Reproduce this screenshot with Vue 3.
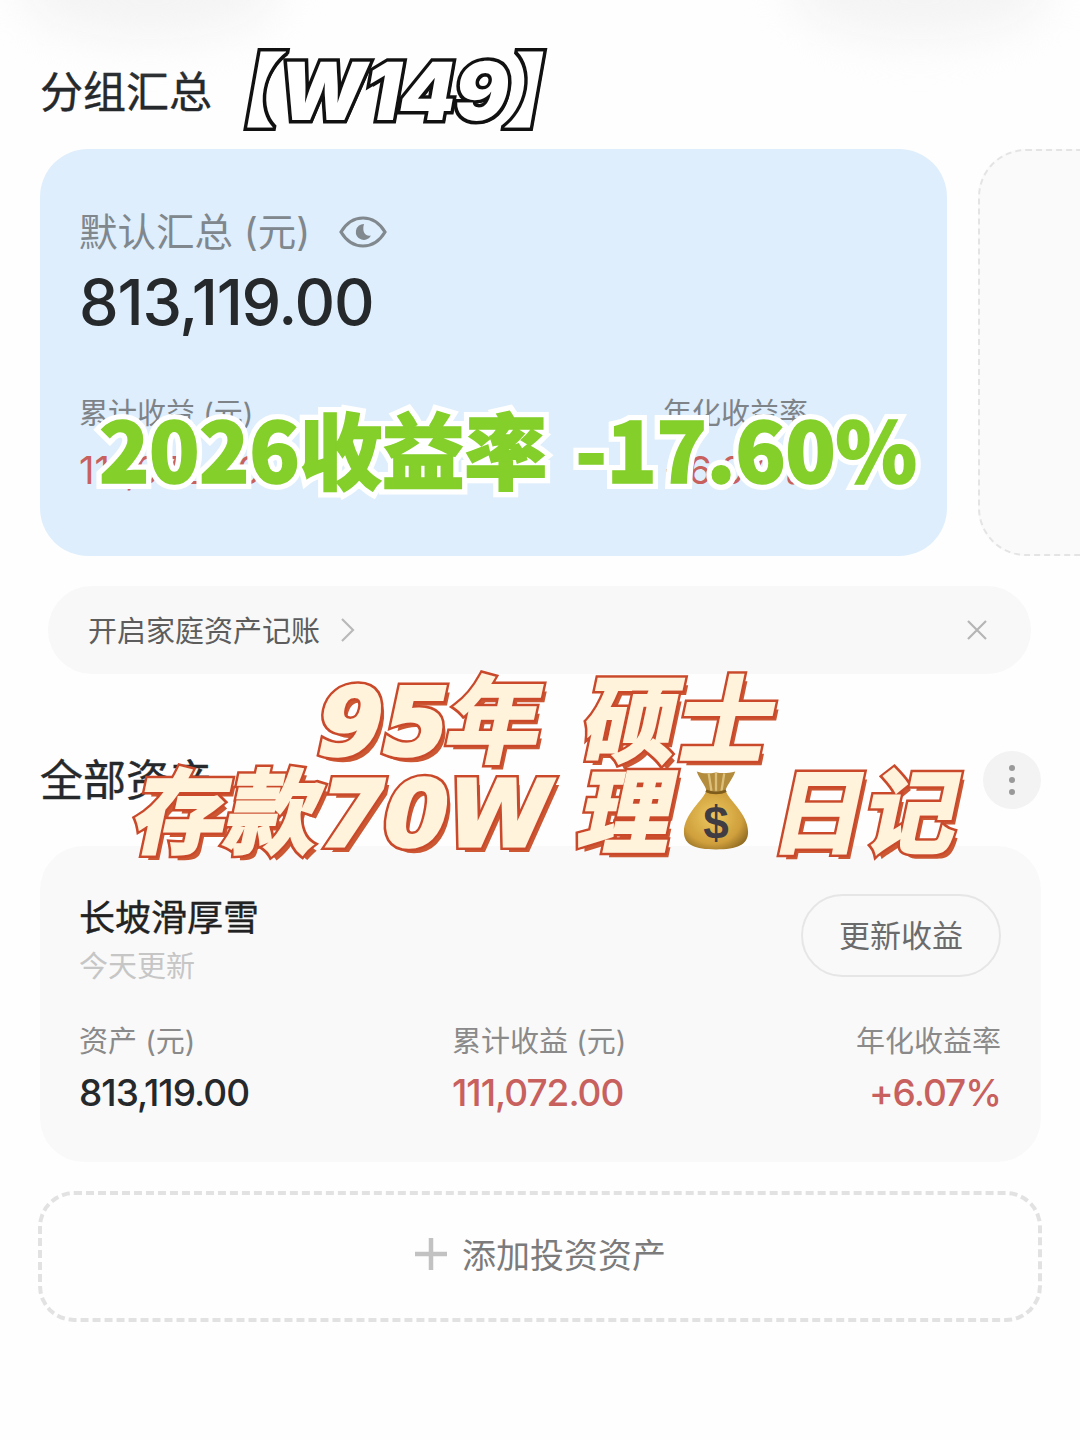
<script setup>
const assetStats = [
  { label: "资产 (元)", value: "813,119.00", cls: "" },
  { label: "累计收益 (元)", value: "111,072.00", cls: "red" },
  { label: "年化收益率", value: "+6.07%", cls: "red end" },
];
</script>

<template>
  <div class="page">
    <div class="blob blob-left"></div>
    <div class="blob blob-right"></div>

    <div class="heading">分组汇总</div>

    <div class="summary-row">
      <div class="summary">
        <div class="summary-label">
          <span>默认汇总 (元)</span>
          <svg class="eye" width="48" height="34" viewBox="0 0 48 34" fill="none">
            <path d="M2 17C8 7 15 3 24 3s16 4 22 14c-6 10-13 14-22 14S8 27 2 17Z" stroke="#81898f" stroke-width="3.2" />
            <path d="M25 9a8 8 0 1 0 7 11.5c-5 1.2-9.500-3-7-11.500Z" fill="#81898f" />
          </svg>
        </div>
        <div class="summary-value">813,119.00</div>
        <div class="summary-stats">
          <div class="stat-a">
            <div class="small-label">累计收益 (元)</div>
            <div class="small-value red">111,072.00</div>
          </div>
          <div class="stat-b">
            <div class="small-label">年化收益率</div>
            <div class="small-value red">+6.07%</div>
          </div>
        </div>
      </div>
      <div class="side-card"></div>
    </div>

    <div class="notice">
      <span class="notice-text">开启家庭资产记账</span>
      <svg width="16" height="26" viewBox="0 0 16 26" fill="none">
        <path d="M2 2l11 11L2 24" stroke="#b9b9b9" stroke-width="2.200" />
      </svg>
      <svg class="notice-close" width="22" height="22" viewBox="0 0 22 22" fill="none">
        <path d="M2 2l18 18M20 2L2 20" stroke="#b5b5b5" stroke-width="2.200" />
      </svg>
    </div>

    <div class="section-row">
      <span class="heading-text">全部资产</span>
      <div class="more"><i></i><i></i><i></i></div>
    </div>

    <div class="asset-card">
      <div class="asset-top">
        <div>
          <div class="asset-name">长坡滑厚雪</div>
          <div class="asset-date">今天更新</div>
        </div>
        <div class="update-btn">更新收益</div>
      </div>
      <div class="asset-stats">
        <div v-for="s in assetStats" :key="s.label" class="asset-stat" :class="s.cls">
          <div class="asset-stat-label">{{ s.label }}</div>
          <div class="asset-stat-value">{{ s.value }}</div>
        </div>
      </div>
    </div>

    <div class="add-box">
      <svg width="34" height="34" viewBox="0 0 34 34" fill="none">
        <path d="M17 1v32M1 17h32" stroke="#c2c2c2" stroke-width="4.500" />
      </svg>
      <span>添加投资资产</span>
    </div>

    <!-- стикеры поверх скриншота -->
    <div class="tag-week sticker" data-text="【W149】">【W149】</div>
    <div class="tag-rate sticker" data-text="2026收益率 -17.60%">2026收益率 -17.60%</div>
    <div class="tag-line tag-line-1">
      <span class="sticker" data-text="95年 硕士">95年 硕士</span>
    </div>
    <div class="tag-line tag-line-2">
      <span class="sticker" data-text="存款70W 理">存款70W 理</span>
      <svg class="bag" width="66" height="84" viewBox="0 0 72 88">
        <defs>
          <radialGradient id="bagFill" cx="45%" cy="45%" r="65%">
            <stop offset="0%" stop-color="#ecc860" />
            <stop offset="70%" stop-color="#cf9f3c" />
            <stop offset="100%" stop-color="#8f6b22" />
          </radialGradient>
        </defs>
        <path d="M15 2c8 3 14 2 21 1 7 1 13 1 21-1-3 9-9 14-11 22H26C24 16 18 11 15 2Z" fill="#b48c3e" />
        <path d="M28 4l3 19M36 3v20M45 4l-3 19" stroke="#dcc07a" stroke-width="2.500" fill="none" />
        <path d="M26 22c6 3 14 3 20 0 4 12 25 26 25 46 0 14-12 19-35 19S1 82 1 68c0-20 21-34 25-46Z" fill="url(#bagFill)" />
        <path d="M25 23c6 3 16 3 22 0" stroke="#7d5c1c" stroke-width="3" fill="none" />
        <text x="36" y="76" text-anchor="middle" class="bag-dollar">$</text>
      </svg>
      <span class="sticker tag-tail" data-text="日记">日记</span>
    </div>
  </div>
</template>

<style>
body {
  background: #fff;
}
</style>

<style scoped>
.page {
  position: relative;
  width: 1080px;
  height: 1440px;
  overflow: hidden;
  box-sizing: border-box;
  padding: 64px 39px 0 40px;
  background: #fefefe;
  color: #26292b;
  font-family: Inter, "Noto Sans CJK SC", sans-serif;
}

.blob {
  position: absolute;
  top: -60px;
  width: 260px;
  height: 100px;
  border-radius: 50%;
  background: #f4f4f4;
  filter: blur(22px);
}

.blob-left {
  left: 20px;
}

.blob-right {
  left: 790px;
}

.heading,
.heading-text {
  font-size: 43px;
  line-height: 56px;
  -webkit-text-stroke: 0.4px currentColor;
}

.heading {
  height: 85px;
}

.summary-row {
  display: flex;
  gap: 31px;
  margin-right: -39px;
  overflow: hidden;
}

.summary {
  flex: none;
  box-sizing: border-box;
  width: 907px;
  height: 407px;
  padding: 58px 40px 0 39px;
  border-radius: 48px;
  background: #deeefc;
}

.summary-label {
  display: flex;
  align-items: center;
  gap: 29px;
  color: #80878d;
  font-size: 38.5px;
  line-height: 50px;
}

.summary-value {
  margin-top: 6px;
  font-size: 63px;
  line-height: 78px;
  font-weight: 500;
  letter-spacing: -1.2px;
  color: #26292b;
}

.summary-stats {
  display: flex;
  margin-top: 53px;
}

.stat-a {
  width: 584px;
}

.small-label {
  color: #7e8388;
  font-size: 29px;
  line-height: 40px;
}

.small-value {
  margin-top: 11px;
  font-size: 38px;
  line-height: 50px;
}

.red {
  color: #c8605e;
}

.side-card {
  flex: none;
  box-sizing: border-box;
  width: 200px;
  height: 407px;
  border: 2px dashed #e4e4e4;
  border-radius: 48px;
  background: #fafafa;
}

.notice {
  display: flex;
  align-items: center;
  gap: 20px;
  box-sizing: border-box;
  width: 983px;
  height: 88px;
  margin: 30px 0 0 8px;
  padding: 0 43px 0 40px;
  border-radius: 44px;
  background: #f8f8f8;
}

.notice-text {
  margin-top: -2px;
  color: #5d5d5d;
  font-size: 29px;
}

.notice-close {
  margin-left: auto;
}

.section-row {
  display: flex;
  align-items: center;
  justify-content: space-between;
  height: 58px;
  margin-top: 77px;
}

.more {
  display: flex;
  flex-direction: column;
  align-items: center;
  justify-content: center;
  gap: 6px;
  width: 58px;
  height: 58px;
  border-radius: 50%;
  background: #f3f3f3;
}

.more i {
  width: 6px;
  height: 6px;
  border-radius: 50%;
  background: #999;
}

.asset-card {
  box-sizing: border-box;
  height: 316px;
  margin-top: 37px;
  padding: 49px 40px 0 39px;
  border-radius: 44px;
  background: #f9f9f9;
}

.asset-top {
  display: flex;
  justify-content: space-between;
  align-items: flex-start;
}

.asset-name {
  color: #222;
  font-size: 36px;
  line-height: 46px;
  -webkit-text-stroke: 0.4px currentColor;
}

.asset-date {
  margin-top: 5px;
  color: #c6c6c6;
  font-size: 29px;
  line-height: 42px;
}

.update-btn {
  box-sizing: border-box;
  width: 200px;
  height: 83px;
  margin-top: -1px;
  border: 2px solid #e6e6e6;
  border-radius: 42px;
  color: #6b6b6b;
  font-size: 31px;
  line-height: 79px;
  text-align: center;
}

.asset-stats {
  display: grid;
  grid-template-columns: 373px 1fr 1fr;
  margin-top: 33px;
}

.asset-stat-label {
  color: #8a8a8a;
  font-size: 29px;
  line-height: 42px;
}

.asset-stat-value {
  margin-top: 5px;
  font-size: 37px;
  line-height: 50px;
  font-weight: 500;
  letter-spacing: -1px;
}

.asset-stat.end {
  text-align: right;
}

.add-box {
  display: flex;
  align-items: center;
  justify-content: center;
  gap: 14px;
  box-sizing: border-box;
  width: 1004px;
  height: 131px;
  margin: 29px 0 0 -2px;
  padding-bottom: 6px;
  border: 4px dashed #e2e2e2;
  border-radius: 36px;
  color: #7b7b7b;
  font-size: 34px;
}

/* ::before -- обводка под текстом */
.sticker {
  position: relative;
  display: inline-block;
  z-index: 0;
  white-space: pre;
}

.sticker::before {
  content: attr(data-text);
  position: absolute;
  left: 0;
  top: 0;
  z-index: -1;
  white-space: pre;
}

.tag-week {
  position: absolute;
  left: 201px;
  top: 36px;
  color: #fff;
  font-family: Inter, "Noto Sans CJK SC", sans-serif;
  font-size: 80px;
  line-height: 110px;
  font-weight: 900;
  letter-spacing: -1px;
  transform: skewX(-10deg);
}

.tag-week::before {
  -webkit-text-stroke: 7px #111;
  text-shadow: 3px 3px 0 #111;
}

.tag-rate {
  position: absolute;
  left: 99px;
  top: 389px;
  color: #84cf2a;
  font-family: "Noto Sans CJK SC", sans-serif;
  font-size: 83px;
  line-height: 116px;
  font-weight: 900;
  word-spacing: 10px;
  letter-spacing: -0.5px;
  -webkit-text-stroke: 1.500px #84cf2a;
}

.tag-rate::before {
  -webkit-text-stroke: 12px #fff;
}

.tag-line {
  position: absolute;
  display: flex;
  align-items: center;
  color: #fff3dc;
  font-family: "DejaVu Sans", "Noto Sans CJK SC", sans-serif;
  line-height: 96px;
  font-weight: 700;
}

.tag-line .sticker {
  transform: skewX(-12deg);
  -webkit-text-stroke: 3px #fff3dc;
}

.tag-line .sticker::before {
  -webkit-text-stroke: 8px #c9492a;
  text-shadow: 3px 3px 0 #cc5733, 6px 6px 0 #cc5733;
}

.tag-line-1 {
  left: 318px;
  top: 675px;
  font-size: 94px;
  word-spacing: 10px;
}

.tag-line-2 {
  left: 136px;
  top: 767px;
  font-size: 92px;
}

.bag {
  margin: -10px 26px 0 9px;
}

.bag-dollar {
  fill: #3f3c44;
  font-family: "Liberation Sans", sans-serif;
  font-size: 50px;
  font-weight: 700;
}
</style>
